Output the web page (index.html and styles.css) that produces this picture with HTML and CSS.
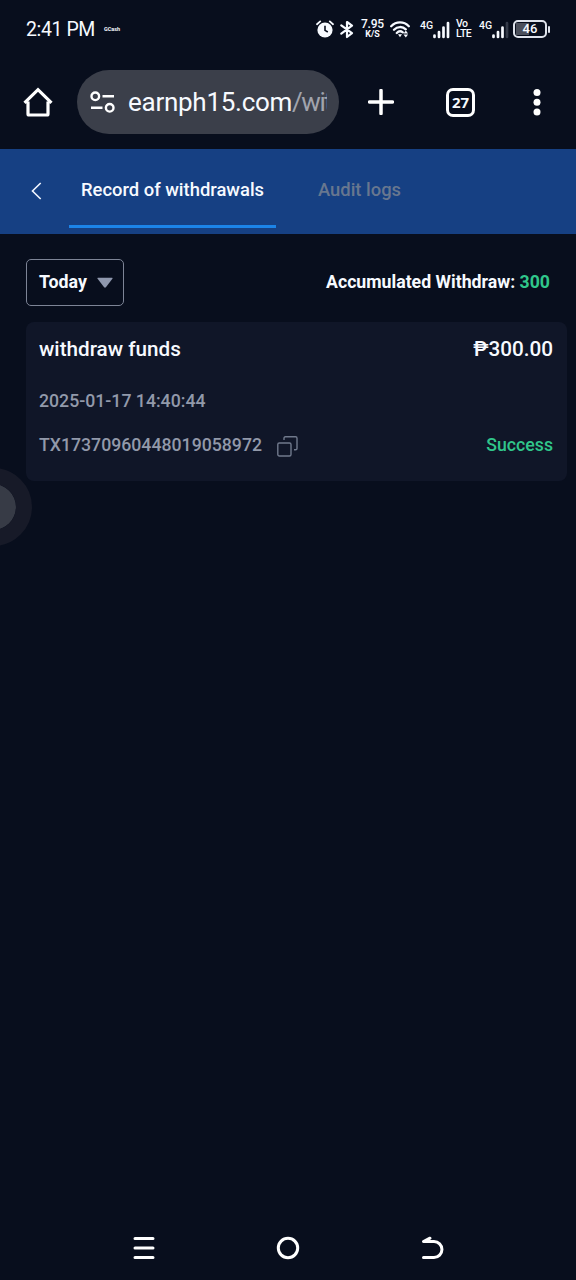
FILE: index.html
```html
<!DOCTYPE html>
<html lang="en">
<head>
<meta charset="utf-8">
<title>Record of withdrawals</title>
<link rel="stylesheet" href="styles.css">
</head>
<body>
<div class="screen">
  <header class="status">
    <span class="clock">2:41 PM</span>
    <span class="carrier">GCash</span>
    <div class="indicators">
      <svg class="alarm" width="18" height="20" viewBox="0 0 18 20"><circle cx="9" cy="11" r="7.6" fill="#f7faff"/><path d="M1 5.2 4.2 2.4M17 5.2 13.8 2.4" stroke="#f7faff" stroke-width="1.8" stroke-linecap="round"/><path d="M9 6.8V11.4L11.8 13" stroke="#080e1d" stroke-width="1.6" fill="none"/></svg>
      <svg class="bluetooth" width="14" height="20" viewBox="0 0 14 20"><path d="M1.3 6.3 12 14.1 7 18V3L12 6.7 1.3 14.6" fill="none" stroke="#f7faff" stroke-width="2.2" stroke-linejoin="round" stroke-linecap="round"/></svg>
      <div class="speed"><span class="rate">7.95</span><span class="unit">K/S</span></div>
      <svg class="wifi" width="20" height="18" viewBox="0 0 20 18"><path d="M1.200 6.200C6.200 1.200 13.800 1.200 18.800 6.200M4 9.700C7.500 6.200 12.500 6.200 15.800 9.300M6.800 13C8.600 11 10.800 10.800 12.800 12.300" fill="none" stroke="#f7faff" stroke-width="2.300" stroke-linecap="round"/><path d="M8 14.300 12 14.300 10 17.300z M13.500 13.500 15.800 10.600 18.100 13.500z M13.500 14.500 15.800 17.400 18.100 14.500z" fill="#f7faff"/></svg>
      <div class="cell">
        <span class="gen">4G</span>
        <svg width="17" height="18" viewBox="0 0 17 18"><path d="M1.500 14.500v1.500M6 11v5M10.500 6.500v9.500M15 2v14" stroke="#f7faff" stroke-width="2.700" stroke-linecap="round"/></svg>
      </div>
      <div class="volte"><span>Vo</span><span>LTE</span></div>
      <div class="cell second">
        <span class="gen">4G</span>
        <svg width="17" height="18" viewBox="0 0 17 18"><path d="M1.500 14.500v1.500M6 11v5M10.500 6.500v9.500" stroke="#f7faff" stroke-width="2.700" stroke-linecap="round"/><path d="M15 2v14" stroke="#343a49" stroke-width="2.700" stroke-linecap="round"/></svg>
      </div>
      <div class="battery"><span class="level">46</span></div>
      <span class="nub"></span>
    </div>
  </header>

  <div class="toolbar">
    <svg class="home" width="30" height="30" viewBox="0 0 30 30"><path d="M5 14.500V27Q5 28 6 28H24Q25 28 25 27V14.500M1.500 15.800 15 2.700 28.500 15.800" fill="none" stroke="#fff" stroke-width="3.200" stroke-linejoin="miter"/></svg>
    <div class="address">
      <svg width="25" height="22" viewBox="0 0 25 22"><g fill="none" stroke="#fff" stroke-width="2.400"><circle cx="5.300" cy="5.300" r="3.800"/><circle cx="19.700" cy="16.800" r="3.800"/><path d="M12.500 5.300H24M1 16.800H12.500"/></g></svg>
      <div class="url">earnph15.com<span class="path">/wit</span></div>
    </div>
    <svg class="plus" width="26" height="26" viewBox="0 0 26 26"><path d="M13 1.500V24.500M1.500 13H24.500" stroke="#fff" stroke-width="3.500" stroke-linecap="round"/></svg>
    <div class="tabs-count">27</div>
    <svg class="more" width="8" height="28" viewBox="0 0 8 28"><g fill="#fff"><circle cx="4" cy="4.600" r="3.500"/><circle cx="4" cy="14.300" r="3.500"/><circle cx="4" cy="23.900" r="3.500"/></g></svg>
  </div>

  <nav class="tabs">
    <svg class="back" width="11" height="18" viewBox="0 0 11 18"><path d="M9.700 1 1.500 9 9.700 17" fill="none" stroke="#f2f6ff" stroke-width="1.600"/></svg>
    <div class="tab active">Record of withdrawals</div>
    <div class="tab audit">Audit logs</div>
  </nav>

  <main class="content">
    <div class="filter-row">
      <div class="select"><span>Today</span><svg width="16" height="12" viewBox="0 0 16 12"><path d="M1 .8H15Q16 .8 15.400 1.800L8.900 10.300Q8 11.200 7.100 10.300L.6 1.800Q0 .8 1 .8Z" fill="#8f98ae"/></svg></div>
      <div class="total">Accumulated Withdraw: <span class="amount">300</span></div>
    </div>
    <section class="card">
      <div class="line title"><span class="name">withdraw funds</span><span class="value">₱300.00</span></div>
      <div class="line date">2025-01-17 14:40:44</div>
      <div class="line tx">
        <span class="id">TX17370960448019058972</span>
        <svg width="21" height="21" viewBox="0 0 21 21"><g fill="none" stroke="#70798c" stroke-width="1.400"><rect x=".8" y="7" width="13.200" height="13" rx="1.500"/><path d="M7 4V2.200Q7 .8 8.400 .8H18.600Q20 .8 20 2.200V12.400Q20 13.800 18.600 13.800H17"/></g></svg>
        <span class="state">Success</span>
      </div>
    </section>
  </main>

  <footer class="navbar">
    <svg width="24" height="26" viewBox="0 0 24 26"><path d="M3 3.500H21M3 13H21M3 22.500H21" stroke="#fff" stroke-width="3" stroke-linecap="round"/></svg>
    <svg width="24" height="26" viewBox="0 0 24 26"><circle cx="12" cy="13" r="9.700" fill="none" stroke="#fff" stroke-width="3"/></svg>
    <svg width="24" height="26" viewBox="0 0 24 26"><path d="M10 3.200 3.500 6.600H14A7.900 7.900 0 0 1 14 22.500H3.500" fill="none" stroke="#fff" stroke-width="3" stroke-linecap="round" stroke-linejoin="round"/></svg>
  </footer>
  <div class="assist"></div>
</div>
</body>
</html>
```
FILE: styles.css
```css
* { box-sizing: border-box; }
body { margin: 0; background: #080e1d; color: #f7faff; font-family: Roboto, "Liberation Sans", sans-serif; }
svg { display: block; flex: none; }
.screen { position: relative; width: 576px; height: 1280px; overflow: hidden; display: flex; flex-direction: column; white-space: nowrap; }

.status { height: 58px; display: flex; align-items: center; padding-left: 26px; }
.clock { width: 78px; padding-top: 2px; font-size: 19.5px; line-height: 24px; letter-spacing: -.4px; }
.carrier { font-size: 5.5px; font-weight: 700; line-height: 8px; }
.indicators { display: flex; align-items: center; margin-left: auto; padding-right: 26px; }
.alarm { margin-right: 6px; }
.bluetooth { margin-right: 7px; }
.speed { width: 23px; margin-right: 6px; display: flex; flex-direction: column; align-items: center; font-weight: 500; }
.rate { font-size: 12px; line-height: 11px; letter-spacing: -.2px; }
.unit { font-size: 9px; line-height: 9px; font-weight: 700; }
.wifi { margin-right: 10px; }
.cell { display: flex; height: 20px; align-items: flex-end; width: 30px; margin-right: 6px; }
.cell.second { margin-right: 4px; }
.gen { width: 13px; align-self: flex-start; padding-top: 1px; font-size: 10.5px; line-height: 11px; font-weight: 500; }
.volte { width: 17px; margin-right: 6px; display: flex; flex-direction: column; font-size: 10.5px; line-height: 10px; font-weight: 500; letter-spacing: -.5px; }
.battery { width: 34px; height: 18px; border: 2px solid #dfe3ec; border-radius: 5px; background: linear-gradient(#4b4f5b, #4b4f5b) 1px 1px / 13px 12px no-repeat; display: flex; align-items: center; justify-content: center; }
.level { font-size: 13px; line-height: 14px; font-weight: 500; }
.nub { width: 2px; height: 7px; margin-left: 1px; background: #dfe3ec; border-radius: 1px; }

.toolbar { height: 91px; display: flex; align-items: center; padding: 0 0 3px 23px; }
.home { margin-right: 24px; }
.address { width: 262px; height: 64px; border-radius: 32px; background: #3b3f4a; display: flex; align-items: center; padding: 0 12px 0 13px; margin-right: 29px; }
.url { margin-left: 13px; width: 199px; overflow: hidden; font-size: 26px; line-height: 34px; letter-spacing: -.27px; }
.path { color: #a1a4ad; letter-spacing: -1.5px; }
.plus { margin-right: 52px; }
.tabs-count { width: 29px; height: 29px; border: 3px solid #fff; border-radius: 7px; display: flex; align-items: center; justify-content: center; font: 700 15px/20px "Noto Sans", sans-serif; }
.more { margin-left: 58px; }

.tabs { height: 85px; background: #164083; display: flex; align-items: flex-start; padding-left: 31px; font-size: 18.4px; font-weight: 500; line-height: 24px; }
.back { margin: 33px 27px 0 0; }
.tab { height: 79px; padding: 29px 12px 0; }
.tab.active { width: 207px; border-bottom: 3px solid #1c84e8; }
.tab.audit { margin-left: 30px; color: #68778f; }

.content { flex: 1; padding: 25px 9px 0 26px; }
.filter-row { height: 48px; display: flex; align-items: flex-start; justify-content: space-between; padding-right: 17px; }
.select { width: 98px; height: 47px; border: 1.500px solid #7d8496; border-radius: 5px; display: flex; align-items: center; justify-content: space-between; padding: 0 10px 2px 12px; font-size: 17.8px; font-weight: 700; }
.select svg { margin-top: 3px; }
.total { margin-top: 11px; font-size: 17.7px; font-weight: 700; line-height: 24px; }
.amount { color: #30c68b; }
.card { height: 159px; margin-top: 15px; border-radius: 8px; background: #101628; padding: 14px 14px 0 13px; }
.line { display: flex; align-items: center; justify-content: space-between; line-height: 26px; }
.title { font-size: 20.7px; font-weight: 500; }
.date { margin-top: 26px; font-size: 17.7px; font-weight: 500; color: #9299aa; }
.tx { margin-top: 18px; font-size: 17.7px; font-weight: 500; color: #9299aa; justify-content: flex-start; }
.tx svg { margin: 3px 0 0 15px; }
.state { margin-left: auto; color: #30c68b; }

.navbar { height: 64px; display: flex; justify-content: center; gap: 120px; align-items: center; }
.assist { position: absolute; left: -46px; top: 468px; width: 78px; height: 78px; border: 16px solid #171a28; border-radius: 50%; background: #373b46; background-clip: padding-box; }
```
